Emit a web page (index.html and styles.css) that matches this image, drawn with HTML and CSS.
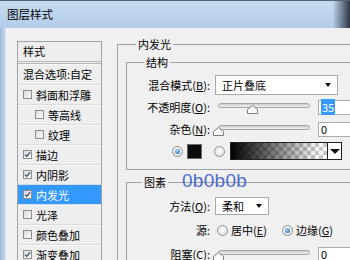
FILE: index.html
```html
<!DOCTYPE html>
<html>
<head>
    <title>图层样式</title>
    <link rel="stylesheet" href="styles.css">
</head>
<body>
    <div class="window">
        <div class="titlebar">图层样式</div>
        <div class="frame">
            <div class="edge"></div>
            <div class="dialog">
                <div class="styles-list">
                    <div class="list-head">样式</div>
                    <div class="list-item blend">混合选项:自定</div>
                    <div class="list-item"><span class="cb"></span>斜面和浮雕</div>
                    <div class="list-item sub"><span class="cb"></span>等高线</div>
                    <div class="list-item sub"><span class="cb"></span>纹理</div>
                    <div class="list-item"><span class="cb"><svg viewBox="0 0 7 7"><path d="M1 3.6 L2.8 5.4 L6 1.4"/></svg></span>描边</div>
                    <div class="list-item"><span class="cb"><svg viewBox="0 0 7 7"><path d="M1 3.6 L2.8 5.4 L6 1.4"/></svg></span>内阴影</div>
                    <div class="list-item selected"><span class="cb"><svg viewBox="0 0 7 7"><path d="M1 3.6 L2.8 5.4 L6 1.4"/></svg></span>内发光</div>
                    <div class="list-item"><span class="cb"></span>光泽</div>
                    <div class="list-item"><span class="cb"></span>颜色叠加</div>
                    <div class="list-item"><span class="cb"><svg viewBox="0 0 7 7"><path d="M1 3.6 L2.8 5.4 L6 1.4"/></svg></span>渐变叠加</div>
                </div>

                <div class="panel">
                    <fieldset class="group outer">
                        <legend>内发光</legend>

                        <fieldset class="group structure">
                            <legend>结构</legend>
                            <div class="rows">
                                <div class="row">
                                    <label>混合模式(<u>B</u>):</label>
                                    <div class="select wide"><span>正片叠底</span><span class="arrow"></span></div>
                                </div>
                                <div class="row">
                                    <label>不透明度(<u>O</u>):</label>
                                    <div class="slider-field">
                                        <div class="slider">
                                            <div class="track"></div>
                                            <svg class="thumb" style="left: 35%" viewBox="0 0 11 9"><polygon points="0.5,8.5 0.5,4.5 5.5,0.5 10.5,4.5 10.5,8.5"/></svg>
                                        </div>
                                        <div class="value"><span class="hl">35</span></div>
                                    </div>
                                </div>
                                <div class="row">
                                    <label>杂色(<u>N</u>):</label>
                                    <div class="slider-field">
                                        <div class="slider">
                                            <div class="track"></div>
                                            <svg class="thumb" style="left: 0%" viewBox="0 0 11 9"><polygon points="0.5,8.5 0.5,4.5 5.5,0.5 10.5,4.5 10.5,8.5"/></svg>
                                        </div>
                                        <div class="value">0</div>
                                    </div>
                                </div>
                                <div class="color-row">
                                    <span class="radio on"></span>
                                    <span class="swatch"></span>
                                    <span class="radio"></span>
                                    <div class="gradient-pick">
                                        <div class="gradient-bar"></div>
                                        <div class="gradient-arrow"><span class="arrow big"></span></div>
                                    </div>
                                </div>
                            </div>
                        </fieldset>

                        <fieldset class="group elements">
                            <legend>图素<span class="watermark">0b0b0b</span></legend>
                            <div class="rows loose">
                                <div class="row">
                                    <label>方法(<u>Q</u>):</label>
                                    <div class="select narrow"><span>柔和</span><span class="arrow"></span></div>
                                </div>
                                <div class="row">
                                    <label>源:</label>
                                    <div class="options">
                                        <div class="option first"><span class="radio"></span><span>居中(<u>E</u>)</span></div>
                                        <div class="option"><span class="radio on"></span><span>边缘(<u>G</u>)</span></div>
                                    </div>
                                </div>
                                <div class="row">
                                    <label>阻塞(<u>C</u>):</label>
                                    <div class="slider-field">
                                        <div class="slider">
                                            <div class="track"></div>
                                            <svg class="thumb" style="left: 0%" viewBox="0 0 11 9"><polygon points="0.5,8.5 0.5,4.5 5.5,0.5 10.5,4.5 10.5,8.5"/></svg>
                                        </div>
                                        <div class="value">0</div>
                                    </div>
                                </div>
                            </div>
                        </fieldset>
                    </fieldset>
                </div>
            </div>
        </div>
    </div>
</body>
</html>
```

FILE: styles.css
```css
* {
    box-sizing: border-box;
}
body {
    margin: 0;
    width: 350px;
    height: 260px;
    overflow: hidden;
    font-family: "Noto Sans CJK SC", sans-serif;
    font-size: 11px;
    color: #000;
    background-color: #f0f0f0;
}
u {
    text-decoration-thickness: 1px;
    text-underline-offset: 1px;
}
.window {
    width: 350px;
    height: 260px;
    display: flex;
    flex-direction: column;
}
.titlebar {
    flex: none;
    height: 28px;
    padding-left: 7px;
    line-height: 27px;
    font-size: 11.5px;
    border-top: 1px solid #55657a;
    background: linear-gradient(to right, rgba(40,50,64,0) 95%, #2e3846 100%),
                linear-gradient(#c6daf0, #b4cde9);
}
.frame {
    flex: 1;
    display: flex;
    min-height: 0;
}
.edge {
    flex: none;
    width: 7px;
    background: linear-gradient(to right, #9fb9d6, #cfe0f2);
    border-right: 1px solid #fbfbfb;
}
.dialog {
    flex: 1;
    display: flex;
    align-items: flex-start;
    padding: 9px 0 0 10px;
    overflow: hidden;
}

/* style list */
.styles-list {
    flex: none;
    width: 85px;
    margin-top: 4px;
    border: 1px solid #a3a3a3;
    background-color: #eeeeee;
}
.list-head {
    height: 22px;
    padding-left: 5px;
    line-height: 19px;
    border-bottom: 3px double #b8b8b8;
}
.list-item {
    display: flex;
    align-items: center;
    gap: 4px;
    height: 20px;
    padding-left: 5px;
    border-bottom: 1px solid #dcdcdc;
    box-shadow: inset 0 1px 0 #f8f8f8;
    white-space: nowrap;
}
.list-item.blend {
    height: 21px;
}
.list-item.sub {
    padding-left: 17px;
}
.list-item.selected {
    background-color: #3399ff;
    color: white;
    box-shadow: none;
}
.cb {
    flex: none;
    width: 9px;
    height: 9px;
    border: 1px solid #8d8d8d;
    background: linear-gradient(135deg, #dcdcdc, #fbfbfb);
    display: flex;
}
.cb svg {
    width: 7px;
    height: 7px;
    fill: none;
    stroke: #2f426e;
    stroke-width: 1.3;
}

/* right panel */
.panel {
    flex: none;
    width: 260px;
    margin-left: 15px;
}
.group {
    margin: 0;
    padding: 0;
    min-inline-size: 0;
    border: 1px solid #a2a2a2;
}
.group > legend {
    padding: 0 2px;
    height: 14px;
    line-height: 14px;
}
.outer {
    padding: 4px 0 0 8px;
}
.outer > legend {
    margin-left: 10px;
}
.structure > legend {
    margin-left: 17px;
}
.structure {
    padding: 6px 0 8px 0;
}
.elements {
    margin-top: 5px;
    padding: 7px 0 0 1px;
}
.elements > legend {
    margin-left: 14px;
    position: relative;
}
.watermark {
    position: absolute;
    left: 40px;
    top: -4px;
    font-family: "Liberation Sans", Arial, sans-serif;
    font-size: 19px;
    line-height: 19px;
    color: #4a6bcf;
    letter-spacing: 0.3px;
}

.rows {
    display: flex;
    flex-direction: column;
    gap: 2px;
}
.rows.loose {
    gap: 4px;
}
.row {
    display: grid;
    grid-template-columns: 83px auto;
    column-gap: 5px;
    align-items: center;
    height: 20px;
}
.elements .row {
    grid-template-columns: 82px auto;
}
.row label {
    text-align: right;
    white-space: nowrap;
}

.select {
    height: 20px;
    display: flex;
    align-items: center;
    justify-content: space-between;
    padding: 0 6px 0 6px;
    border: 1px solid #a9a9a9;
    background-color: white;
}
.select.wide {
    width: 123px;
}
.select.narrow {
    width: 54px;
    height: 18px;
}
.arrow {
    width: 0;
    height: 0;
    border-left: 3px solid transparent;
    border-right: 3px solid transparent;
    border-top: 4px solid #111;
}
.arrow.big {
    border-left-width: 5px;
    border-right-width: 5px;
    border-top-width: 5px;
}

.slider-field {
    display: flex;
    align-items: center;
    gap: 5px;
}
.slider {
    position: relative;
    width: 98px;
    height: 14px;
    padding: 0 3px;
}
.track {
    margin-top: 3px;
    height: 5px;
    border: 1px solid #a4a4a4;
    border-radius: 3px;
    background: linear-gradient(#cdcdcd, #efefef);
}
.thumb {
    position: absolute;
    top: 5px;
    width: 11px;
    height: 9px;
    margin-left: -2.5px;
    fill: #fcfcfc;
    stroke: #7d7d7d;
}
.value {
    width: 40px;
    height: 15px;
    padding-left: 2px;
    line-height: 13px;
    border: 1px solid #abadb3;
    background-color: white;
}
.hl {
    background-color: #3399ff;
    color: white;
    padding: 0 1px;
}

.color-row {
    display: flex;
    align-items: center;
    height: 20px;
    margin-left: 45px;
}
.radio {
    flex: none;
    width: 11px;
    height: 11px;
    border-radius: 50%;
    border: 1px solid #8e8f8f;
    background: radial-gradient(circle at 50% 40%, #ffffff, #dadada);
    display: flex;
    align-items: center;
    justify-content: center;
}
.radio.on::after {
    content: "";
    width: 5px;
    height: 5px;
    border-radius: 50%;
    background: radial-gradient(circle at 40% 35%, #9fd2f7, #1f63a8);
}
.swatch {
    width: 15px;
    height: 15px;
    margin-left: 4px;
    border: 1px solid #6a6a6a;
    background-color: #0b0b0b;
}
.swatch + .radio {
    margin-left: 12px;
}
.gradient-pick {
    display: flex;
    width: 112px;
    height: 18px;
    margin-left: 5px;
    border: 1px solid #202020;
}
.gradient-bar {
    flex: 1;
    background: linear-gradient(to right, #000, rgba(0,0,0,0) 92%),
                repeating-conic-gradient(#c6c6c6 0 25%, #ffffff 0 50%) 0 0 / 8px 8px;
}
.gradient-arrow {
    width: 14px;
    border-left: 1px solid #202020;
    background-color: white;
    display: flex;
    align-items: center;
    justify-content: center;
}

.options {
    display: flex;
    align-items: center;
    padding-left: 2px;
}
.option {
    display: flex;
    align-items: center;
    gap: 3px;
    white-space: nowrap;
}
.option.first {
    width: 65px;
}
```
